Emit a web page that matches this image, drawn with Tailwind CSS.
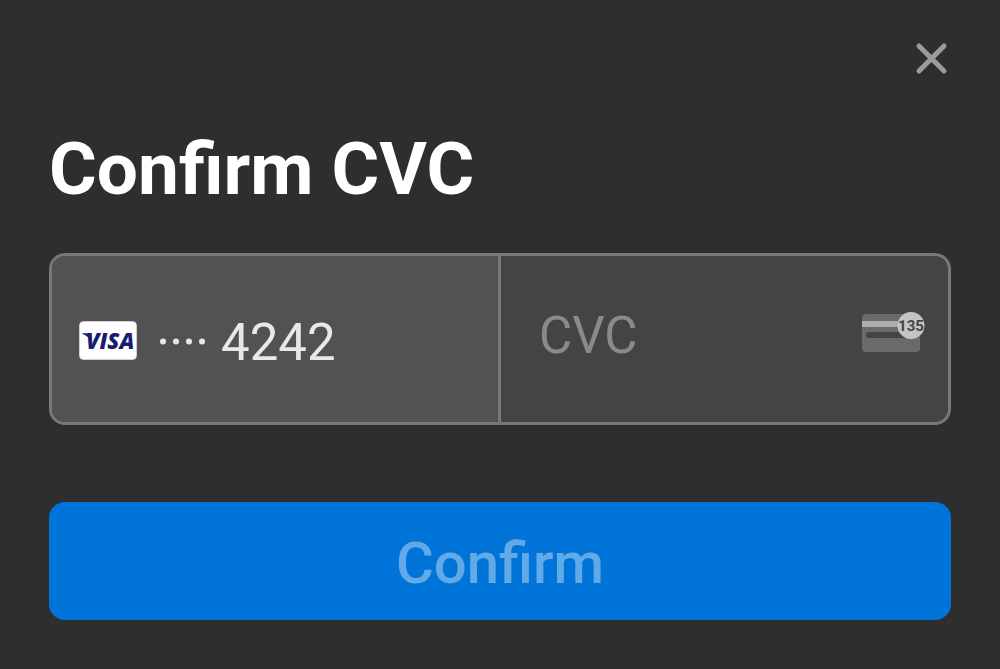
<!DOCTYPE html>
<html lang="en">
<head>
<meta charset="utf-8">
<meta name="viewport" content="width=device-width, initial-scale=1">
<title>Confirm CVC</title>
<script src="https://cdn.jsdelivr.net/npm/@tailwindcss/browser@4"></script>
</head>
<body class="min-h-screen bg-[#2e2e2e] font-['Roboto',sans-serif]">
<main class="flex flex-col px-[49px] pt-[38px] pb-12">
  <div class="flex justify-end">
    <button type="button" aria-label="Close" class="flex size-10 items-center justify-center text-[#9b9b9b]">
      <svg class="size-10" viewBox="0 0 40 40" fill="none" stroke="currentColor" stroke-width="5" stroke-linecap="round"><path d="M8 8l25 25M33 8L8 33"/></svg>
    </button>
  </div>
  <h1 class="mt-[49px] text-[73px] leading-[84px] font-bold text-white">Confirm CVC</h1>
  <form>
    <div class="mt-[42px] grid h-[172px] grid-cols-2 overflow-hidden rounded-2xl border-3 border-[#777780] bg-[#444444]">
      <div class="-mr-px flex items-center border-r-3 border-[#777780] bg-[#525252] pl-[27px] text-[51px] text-[#e8e8e8]">
        <svg class="mt-1 h-10 w-[58px]" viewBox="0 0 58 40" role="img" aria-label="Visa">
          <rect x=".5" y=".5" width="57" height="38" rx="4" fill="#fff" stroke="#d0d0d0"/>
          <text x="7" y="28" font-family="Open Sans" font-size="22" font-weight="800" font-style="italic" fill="#171e71">VISA</text>
          <path d="M3.500 12.200h6.500l2.500 8.500q-3-5.500-9-7.700z" fill="#171e71"/>
        </svg>
        <svg class="mt-1 ml-[22px] h-3 w-[50px]" viewBox="0 0 50 12" fill="currentColor" aria-hidden="true"><circle cx="4" cy="6.500" r="3"/><circle cx="17" cy="6.500" r="3"/><circle cx="30" cy="6.500" r="3"/><circle cx="43" cy="6.500" r="3"/></svg>
        <span class="mt-2 ml-3">4242</span>
      </div>
      <div class="flex min-w-0 items-center pr-6 pb-3 pl-[39px]">
        <input type="text" inputmode="numeric" maxlength="4" placeholder="CVC" aria-label="CVC" class="mt-1.5 min-w-0 flex-1 bg-transparent text-[51px] text-[#e8e8e8] outline-none placeholder:text-[#8a8a8a]">
        <svg class="-mr-px h-[42px] w-[63px] shrink-0" viewBox="0 0 63 42" aria-hidden="true">
          <rect x="0" y="2" width="58" height="38" rx="4" fill="#6a6a6a"/>
          <path d="M0 9h58v6H0z" fill="#adadad"/>
          <rect x="4" y="20" width="50" height="6" rx="3" fill="#444"/>
          <circle cx="49" cy="13.500" r="13.500" fill="#c4c4c4"/>
          <text x="49" y="19" text-anchor="middle" font-family="Roboto" font-size="15" font-weight="700" fill="#444">135</text>
        </svg>
      </div>
    </div>
    <button type="submit" class="mt-[77px] flex h-[118px] w-full items-center justify-center rounded-2xl bg-[#0074d8] pt-1 text-[58px] font-medium text-[#61aae7]">Confirm</button>
  </form>
</main>
</body>
</html>
